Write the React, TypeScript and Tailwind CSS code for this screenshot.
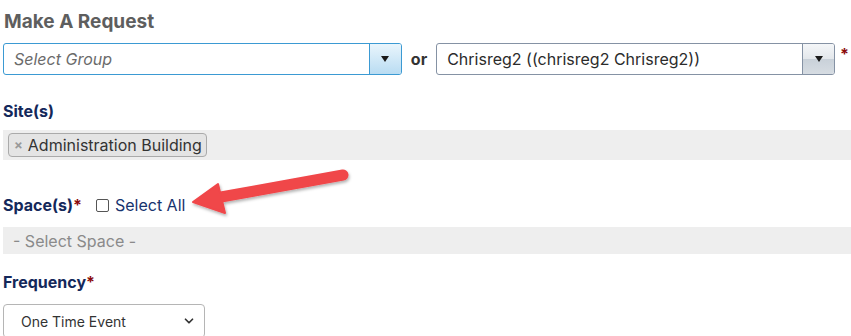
import { ChevronDown } from 'lucide-react'

const Label = ({ text, required }: { text: string; required?: boolean }) => (
  <span className="text-[16px] font-bold text-[#14285a]">
    {text}
    {required && <span className="text-[#8b0a0a]">*</span>}
  </span>
)

const ComboBox = ({
  value,
  placeholder,
  tone,
}: {
  value?: string
  placeholder?: string
  tone: 'blue' | 'gray'
}) => {
  const blue = tone === 'blue'
  return (
    <div
      className={`flex h-[32px] flex-1 rounded-[3px] border bg-white ${
        blue ? 'border-[#3b9ad3]' : 'border-[#8592a4]'
      }`}
    >
      <div className="flex flex-1 items-center px-[10px] text-[16px]">
        {value ? (
          <span className="text-[#2b2b2b]">{value}</span>
        ) : (
          <span className="italic text-[#6b6b6b]">{placeholder}</span>
        )}
      </div>
      <div
        className={`flex w-[32px] items-center justify-center rounded-r-[2px] border-l ${
          blue
            ? 'border-[#3b9ad3] bg-gradient-to-b from-[#e9f5fc] to-[#b9dcf2]'
            : 'border-[#8592a4] bg-[linear-gradient(to_bottom,#f4f6f8_0%,#e3e7eb_50%,#c9d1d9_51%,#d6dce2_100%)]'
        }`}
      >
        <span className="block h-0 w-0 border-x-[4px] border-t-[6px] border-x-transparent border-t-[#1a1a1a]" />
      </div>
    </div>
  )
}

const Arrow = () => (
  <svg
    className="pointer-events-none absolute left-[185px] top-[166px]"
    width="170"
    height="55"
    viewBox="0 0 170 55"
  >
    <defs>
      <filter id="sh" x="-10%" y="-20%" width="130%" height="150%">
        <feDropShadow dx="1" dy="2" stdDeviation="1.5" floodColor="#000" floodOpacity="0.3" />
      </filter>
    </defs>
    <g filter="url(#sh)">
      <line x1="158" y1="9" x2="36" y2="31" stroke="#f0464a" strokeWidth="11" strokeLinecap="round" />
      <polygon points="8,36 33,18 40,47" fill="#f0464a" strokeLinejoin="round" stroke="#f0464a" strokeWidth="2" />
    </g>
  </svg>
)

export default function App() {
  return (
    <div className="relative h-[336px] w-[851px] overflow-hidden bg-white font-['Inter',sans-serif]">
      <div className="flex flex-col pl-[3px]">
        <h1 className="pl-[1px] pt-[10px] text-[19px] font-bold leading-[24px] text-[#5e5e5e]">
          Make A Request
        </h1>

        <div className="mt-[9px] flex items-center">
          <ComboBox tone="blue" placeholder="Select Group" />
          <span className="mx-[9px] text-[16px] font-bold text-[#333]">or</span>
          <ComboBox tone="gray" value="Chrisreg2 ((chrisreg2 Chrisreg2))" />
          <span className="w-[16px] self-start pl-[5px] pt-[1px] text-[16px] font-bold leading-[20px] text-[#8b0a0a]">
            *
          </span>
        </div>

        <div className="mt-[26px] leading-[20px]">
          <Label text="Site(s)" />
        </div>

        <div className="mt-[9px] flex h-[30px] items-center bg-[#eeeeee] pl-[5px]">
          <span className="flex h-[24px] items-center rounded-[4px] border border-[#aaaaaa] bg-[#e4e4e4] pl-[5px] pr-[4px] text-[16px] leading-none text-[#333]">
            <span className="mr-[5px] text-[13px] font-bold text-[#999]">×</span>
            Administration Building
          </span>
        </div>

        <div className="mt-[35px] flex items-center leading-[20px]">
          <Label text="Space(s)" required />
          <label className="ml-[14px] flex items-center text-[16px] text-[#17336e]">
            <span className="mr-[6px] inline-block h-[13px] w-[13px] rounded-[2px] border border-[#555] bg-white" />
            Select All
          </label>
        </div>

        <div className="mt-[12px] flex h-[27px] items-center bg-[#eeeeee] pl-[10px] text-[16px] text-[#8a8a8a]">
          - Select Space -
        </div>

        <div className="mt-[18px] leading-[20px]">
          <Label text="Frequency" required />
        </div>

        <div className="mt-[12px] flex h-[34px] w-[202px] items-center justify-between rounded-[4px] border border-[#b5b5b5] bg-white pl-[17px] pr-[8px] text-[14px] text-[#333]">
          One Time Event
          <ChevronDown size={14} strokeWidth={3} className="text-[#333]" />
        </div>
      </div>
      <Arrow />
    </div>
  )
}
